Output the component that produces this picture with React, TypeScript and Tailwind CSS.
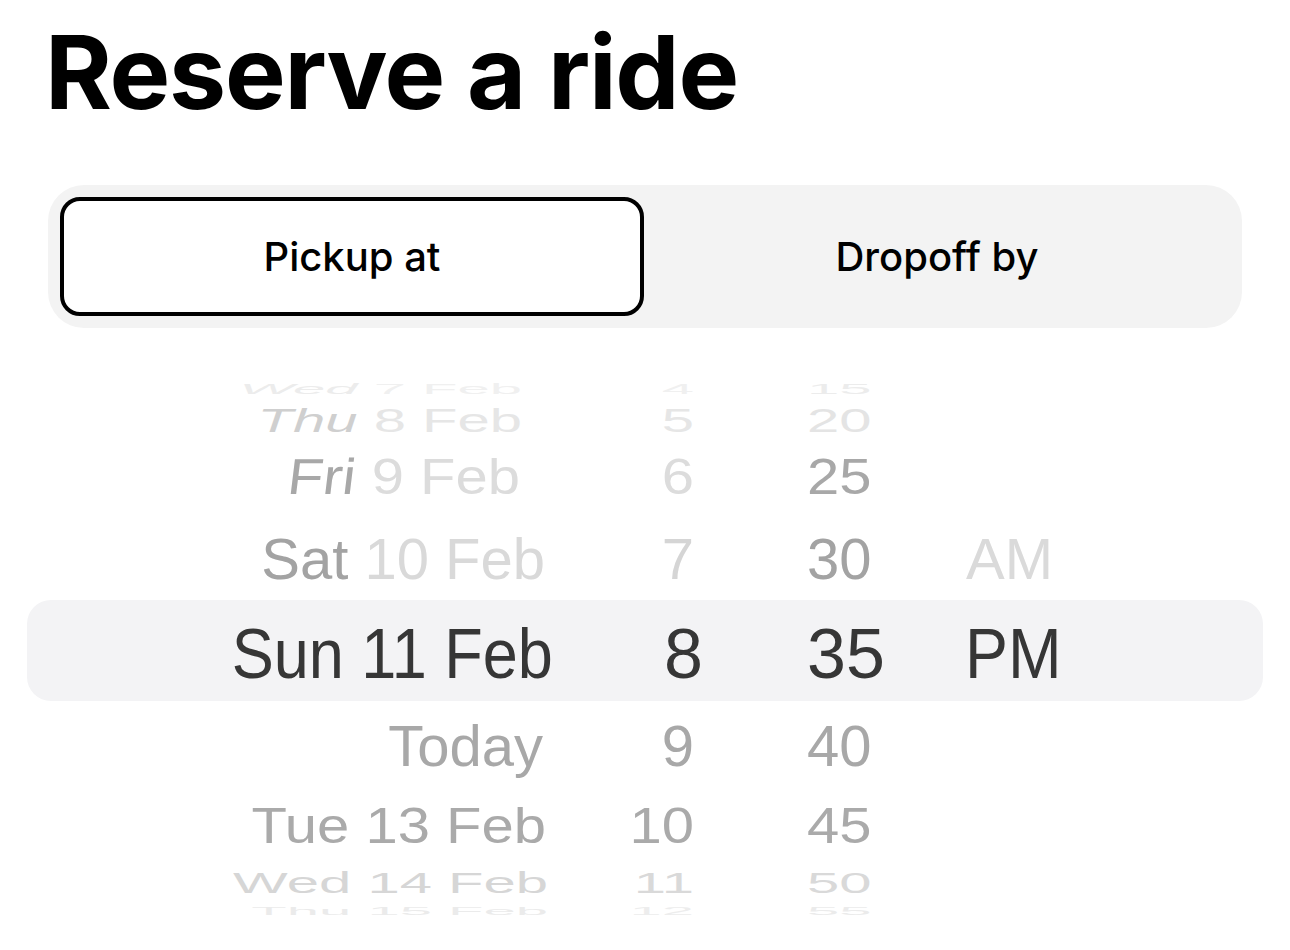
import * as React from 'react';

type Row = {
  day: string;
  date: string;
  hour: string;
  min: string;
  ampm?: string;
  height: string;
  scale: string;
  dateShift: string;
  dayClass: string;
  dateClass: string;
  hourClass: string;
  minClass: string;
  ampmClass?: string;
};

const above: Row[] = [
  {
    day: 'Wed',
    date: '7 Feb',
    hour: '4',
    min: '15',
    height: 'h-[30px]',
    scale: 'scale-y-[0.25]',
    dateShift: 'pr-[26px]',
    dayClass: 'text-[#ececec] italic',
    dateClass: 'text-[#f0f0f0]',
    hourClass: 'text-[#f0f0f0]',
    minClass: 'text-[#ececec]',
  },
  {
    day: 'Thu',
    date: '8 Feb',
    hour: '5',
    min: '20',
    height: 'h-[32px]',
    scale: 'scale-y-[0.58]',
    dateShift: 'pr-[26px]',
    dayClass: 'text-[#cfcfcf] italic',
    dateClass: 'text-[#e6e6e6]',
    hourClass: 'text-[#e6e6e6]',
    minClass: 'text-[#e4e4e4]',
  },
  {
    day: 'Fri',
    date: '9 Feb',
    hour: '6',
    min: '25',
    height: 'h-[82px]',
    scale: 'scale-y-[0.87]',
    dateShift: 'pr-[28px]',
    dayClass: 'text-[#a8a8a8] -skew-x-6',
    dateClass: 'text-[#dcdcdc]',
    hourClass: 'text-[#dcdcdc]',
    minClass: 'text-[#a8a8a8]',
  },
  {
    day: 'Sat',
    date: '10 Feb',
    hour: '7',
    min: '30',
    ampm: 'AM',
    height: 'h-[82px]',
    scale: 'scale-y-100',
    dateShift: 'pr-[3px]',
    dayClass: 'text-[#a3a3a3]',
    dateClass: 'text-[#d9d9d9]',
    hourClass: 'text-[#d5d5d5]',
    minClass: 'text-[#a3a3a3]',
    ampmClass: 'text-[#dadada]',
  },
];

const below: Row[] = [
  {
    day: '',
    date: 'Today',
    hour: '9',
    min: '40',
    height: 'h-[90px]',
    scale: 'scale-y-100',
    dateShift: 'pr-[5px]',
    dayClass: '',
    dateClass: 'text-[#a8a8a8]',
    hourClass: 'text-[#a8a8a8]',
    minClass: 'text-[#a8a8a8]',
  },
  {
    day: 'Tue',
    date: '13 Feb',
    hour: '10',
    min: '45',
    height: 'h-[70px]',
    scale: 'scale-y-[0.85]',
    dateShift: 'pr-[2px]',
    dayClass: 'text-[#aaaaaa]',
    dateClass: 'text-[#aaaaaa]',
    hourClass: 'text-[#aaaaaa]',
    minClass: 'text-[#aaaaaa]',
  },
  {
    day: 'Wed',
    date: '14 Feb',
    hour: '11',
    min: '50',
    height: 'h-[44px]',
    scale: 'scale-y-[0.5]',
    dateShift: 'pr-0',
    dayClass: 'text-[#d6d6d6]',
    dateClass: 'text-[#d6d6d6]',
    hourClass: 'text-[#d9d9d9]',
    minClass: 'text-[#d9d9d9]',
  },
  {
    day: 'Thu',
    date: '15 Feb',
    hour: '12',
    min: '55',
    height: 'h-[12px]',
    scale: 'scale-y-[0.2]',
    dateShift: 'pr-0',
    dayClass: 'text-[#ebebeb]',
    dateClass: 'text-[#ebebeb]',
    hourClass: 'text-[#ededed]',
    minClass: 'text-[#ebebeb]',
  },
];

function WheelRow({ row }: { row: Row }) {
  return (
    <div className={`flex items-center ${row.height}`}>
      <div className={`flex w-full items-center leading-none text-[58px] ${row.scale}`}>
        <div className={`w-[521px] text-right whitespace-nowrap ${row.dateShift}`}>
          {row.day && <span className={`inline-block ${row.dayClass}`}>{row.day}</span>}
          {row.day && ' '}
          <span className={row.dateClass}>{row.date}</span>
        </div>
        <div className={`w-[146px] text-right ${row.hourClass}`}>{row.hour}</div>
        <div className={`w-[272px] pl-[113px] ${row.minClass}`}>{row.min}</div>
        <div className={`flex-1 ${row.ampmClass ?? ''}`}>{row.ampm ?? ''}</div>
      </div>
    </div>
  );
}

export default function App() {
  return (
    <div className="h-[950px] w-full overflow-hidden bg-white">
      <h1 className="pt-[21px] pl-[45px] text-[102px] font-bold leading-none tracking-[-0.012em] text-black font-['Inter',sans-serif]">
        Reserve a ride
      </h1>

      <div className="mx-[48px] mt-[62px] flex h-[143px] rounded-[36px] bg-[#f3f3f3] p-[12px] font-['Inter',sans-serif]">
        <button className="flex w-[584px] items-center justify-center rounded-[20px] border-4 border-black bg-white text-[40px] font-medium text-black">
          Pickup at
        </button>
        <button className="flex flex-1 items-center justify-center text-[40px] font-medium text-black">
          Dropoff by
        </button>
      </div>

      <div className="mt-[46px] px-[27px] font-['Liberation_Sans',Arial,sans-serif]">
        {above.map((r) => (
          <WheelRow key={r.day + r.date} row={r} />
        ))}

        <div className="flex h-[101px] items-center rounded-[24px] bg-[#f3f3f5] text-[70px] leading-none text-[#363636]">
          <div className="flex w-full translate-y-[3px] items-center">
            <div className="w-[526px] text-right whitespace-nowrap">
              <span className="inline-block origin-right scale-x-[0.9]">Sun 11 Feb</span>
            </div>
            <div className="w-[150px] text-right">8</div>
            <div className="w-[262px] pl-[104px]">35</div>
            <div className="flex-1">
              <span className="inline-block origin-left scale-x-[0.92]">PM</span>
            </div>
          </div>
        </div>

        {below.map((r) => (
          <WheelRow key={r.day + r.date} row={r} />
        ))}
      </div>
    </div>
  );
}
